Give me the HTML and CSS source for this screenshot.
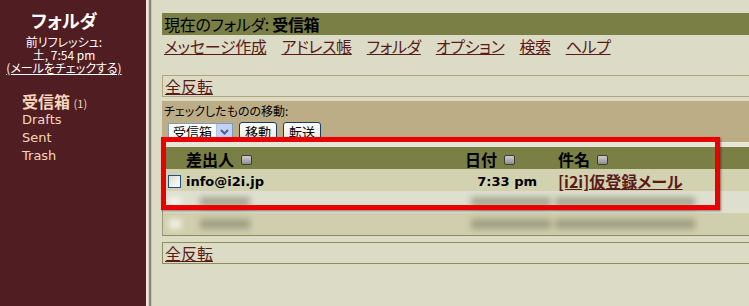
FILE: index.html
```html
<!DOCTYPE html>
<html lang="ja">
<head>
<meta charset="utf-8">
<title>受信箱</title>
<link rel="stylesheet" href="styles.css">
</head>
<body>
<div class="page">
  <aside class="sidebar">
    <div class="side-head">フォルダ</div>
    <div class="refresh">
      <div>前リフレッシュ:</div>
      <div>土, 7:54 pm</div>
      <div><a class="side-link" href="#">(メールをチェックする)</a></div>
    </div>
    <ul class="folders">
      <li class="inbox"><b>受信箱</b> <small>(1)</small></li>
      <li>Drafts</li>
      <li>Sent</li>
      <li>Trash</li>
    </ul>
  </aside>
  <div class="divider"></div>
  <main class="main">
    <div class="content">
      <div class="titlebar">現在のフォルダ: <b>受信箱</b></div>
      <nav class="nav">
        <a href="#">メッセージ作成</a>
        <a href="#">アドレス帳</a>
        <a href="#">フォルダ</a>
        <a href="#">オプション</a>
        <a href="#">検索</a>
        <a href="#">ヘルプ</a>
      </nav>
      <div class="togglebox tan"><a href="#">全反転</a></div>
      <div class="movebox">
        <div class="move-label">チェックしたものの移動:</div>
        <div class="move-controls">
          <span class="select"><span class="select-text">受信箱</span><span class="select-arrow"><svg width="9" height="6" viewBox="0 0 9 6"><path d="M1 1 L4.5 4.5 L8 1" fill="none" stroke="#4d6185" stroke-width="2"/></svg></span></span>
          <button class="btn">移動</button>
          <button class="btn">転送</button>
        </div>
      </div>
      <div class="msgs">
        <div class="row head">
          <span></span>
          <span class="hcell">差出人<i class="sort"></i></span>
          <span class="hcell">日付<i class="sort"></i></span>
          <span class="hcell subj">件名<i class="sort"></i></span>
        </div>
        <div class="row r1">
          <span class="cbcell"><span class="cb"></span></span>
          <span class="from">info@i2i.jp</span>
          <span class="date">7:33 pm</span>
          <span class="subj"><a href="#">[i2i]仮登録メール</a></span>
        </div>
        <div class="row r2">
          <span class="blur b-cb"></span>
          <span class="blur b-from"></span>
          <span class="blur b-date"></span>
          <span class="blur b-subj"></span>
        </div>
        <div class="row r3">
          <span class="blur b-cb"></span>
          <span class="blur b-from"></span>
          <span class="blur b-date"></span>
          <span class="blur b-subj"></span>
        </div>
      </div>
      <div class="togglebox olive"><a href="#">全反転</a></div>
    </div>
  </main>
</div>
<div class="highlight"></div>
</body>
</html>
```
FILE: styles.css
```css
html, body {
  margin: 0;
  padding: 0;
}
body {
  width: 749px;
  height: 306px;
  overflow: hidden;
  font-family: "Noto Sans CJK JP", "DejaVu Sans", sans-serif;
  font-feature-settings: "palt";
  background: #dcdcc6;
}
.page {
  display: flex;
  height: 306px;
}
.sidebar {
  width: 146px;
  flex: none;
  background: #4f1d22;
  color: #ffffff;
  box-sizing: border-box;
  padding: 9px 18px 0 0;
}
.side-head {
  text-align: center;
  font-size: 18px;
  font-weight: bold;
  line-height: 22px;
}
.refresh {
  margin-top: 4px;
  text-align: center;
  font-size: 12px;
  line-height: 13px;
}
.refresh div {
  height: 13px;
}
.side-link {
  color: #ffffff;
  text-decoration: underline;
}
.folders {
  list-style: none;
  margin: 20px 0 0 0;
  padding: 0 0 0 22px;
  color: #f6d6bd;
  font-family: "DejaVu Sans", sans-serif;
  font-size: 13px;
  line-height: 18px;
}
.folders .inbox {
  font-family: "Noto Sans CJK JP", sans-serif;
  font-size: 16px;
  line-height: 15px;
}
.folders .inbox small {
  font-size: 11px;
  font-weight: normal;
}
.divider {
  width: 6px;
  flex: none;
  background: linear-gradient(to right, #f3e3dc 0 2px, #d6d2c2 2px 3px, #85857a 3px 5px, #c4c4b0 5px 6px);
}
.main {
  flex: 1;
  overflow: hidden;
  padding: 13px 0 0 10px;
}
.content {
  width: 640px;
}
.titlebar {
  background: #7a7f46;
  height: 22px;
  line-height: 22px;
  font-size: 16px;
  letter-spacing: -0.3px;
  padding-left: 2px;
  color: #000;
}
.nav {
  display: flex;
  gap: 15px;
  padding-left: 2px;
  margin-top: 1px;
  font-size: 16px;
  letter-spacing: -0.35px;
  line-height: 20px;
}
a {
  color: #5a1a1a;
  text-decoration: underline;
}
.togglebox {
  height: 20px;
  line-height: 20px;
  font-size: 16px;
  padding-left: 2px;
}
.togglebox.tan {
  margin-top: 19px;
  border: 1px solid #b4a37b;
}
.togglebox.olive {
  margin-top: 6px;
  border: 1px solid #8c8d5c;
}
.movebox {
  margin-top: 4px;
  height: 41px;
  background: #bdad87;
  box-sizing: border-box;
  padding: 1px 0 0 2px;
}
.move-label {
  font-size: 12px;
  line-height: 17px;
}
.move-controls {
  display: flex;
  align-items: center;
  gap: 6px;
  padding-left: 4px;
  margin-top: 3px;
}
.select {
  display: flex;
  align-items: center;
  width: 65px;
  height: 18px;
  box-sizing: border-box;
  border: 1px solid #7f9db9;
  background: #fff;
  font-size: 13px;
  line-height: 16px;
}
.select-text {
  flex: 1;
  padding-left: 4px;
}
.select-arrow {
  width: 15px;
  height: 16px;
  background: #c3d3f8;
  border-left: 1px solid #b0c3ea;
  display: flex;
  align-items: center;
  justify-content: center;
}
.btn {
  width: 38px;
  height: 19px;
  padding: 0;
  border: 1px solid #1a3c64;
  border-radius: 3px;
  background: linear-gradient(#ffffff, #ece9d8);
  font-family: "Noto Sans CJK JP", sans-serif;
  font-feature-settings: "palt";
  font-size: 13px;
  line-height: 16px;
  color: #000;
}
.msgs {
  border-top: 5px solid #e6e6d6;
  border-left: 1px solid #9a9a74;
  border-bottom: 1px solid #8c8d5c;
}
.row {
  display: grid;
  grid-template-columns: 23px 279px 72px 1fr;
  height: 22px;
  align-items: center;
}
.head {
  background: #7a7f46;
  font-size: 16px;
  font-weight: bold;
}
.hcell {
  display: flex;
  align-items: center;
}
.sort {
  display: inline-block;
  width: 9px;
  height: 8px;
  margin-left: 7px;
  margin-top: 2px;
  border: 1px solid #3c3c3c;
  border-radius: 2px;
  background: linear-gradient(#cfcfcf, #8e8e8e);
}
.subj {
  padding-left: 21px;
}
.r1 {
  background: #d2d2b0;
}
.cbcell {
  display: flex;
  padding-left: 5px;
}
.cb {
  width: 11px;
  height: 11px;
  border: 1px solid #1c5180;
  background: linear-gradient(135deg, #dcdcd6, #ffffff);
}
.from, .date {
  font-family: "DejaVu Sans", sans-serif;
  font-weight: bold;
  font-size: 13px;
}
.date {
  text-align: right;
}
.r1 .subj a {
  font-size: 16px;
  font-weight: bold;
}
.r2 {
  background: #dfdfcf;
}
.r3 {
  background: #cfcfad;
}
.blur {
  height: 10px;
  filter: blur(3px);
  background: #80806a;
  opacity: 0.6;
}
.b-cb {
  width: 12px;
  margin-left: 6px;
  background: #f6f6ee;
  opacity: 0.9;
}
.b-from {
  width: 50px;
  margin-left: 14px;
}
.b-date {
  width: 80px;
  margin-left: 6px;
}
.b-subj {
  width: 140px;
  margin-left: 18px;
}
.highlight {
  position: absolute;
  left: 161px;
  top: 137px;
  width: 549px;
  height: 63px;
  border: 5px solid #e80000;
  box-shadow: 1px 1px 2px rgba(60, 0, 0, 0.5);
  pointer-events: none;
}
```
